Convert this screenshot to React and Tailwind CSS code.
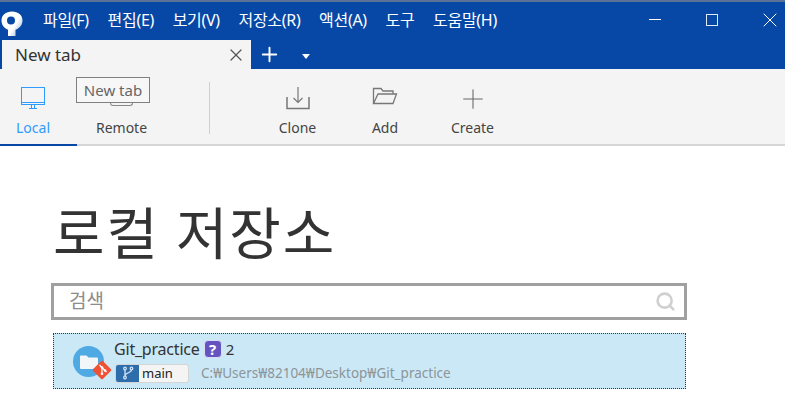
import React from 'react';
import { X, Plus, Search } from 'lucide-react';

const FONT = 'font-["Noto_Sans","Noto_Sans_CJK_KR",sans-serif]';
const menus = ['파일(F)', '편집(E)', '보기(V)', '저장소(R)', '액션(A)', '도구', '도움말(H)'];

const Logo = () => (
  <svg width="22" height="26" viewBox="0 0 22 26">
    <defs>
      <linearGradient id="logoFade" x1="0.3" y1="0.3" x2="1" y2="0.8">
        <stop offset="0.5" stopColor="#fff" />
        <stop offset="1" stopColor="#9db8dc" />
      </linearGradient>
    </defs>
    <path d="M11 0.500C4.800 0.500 0.500 4 0.500 9.500c0 4.300 2.700 7.700 6.500 9.300V25h7.500v-6.200c4.200-1.400 7-5 7-9.300C21.500 4 17.200 0.500 11 0.500z" fill="url(#logoFade)" />
    <circle cx="10" cy="9.500" r="4" fill="#0747a6" />
  </svg>
);

const MonitorIcon = () => (
  <svg width="26" height="23" viewBox="0 0 26 23" fill="none" stroke="#2e9bff" strokeWidth="1">
    <rect x="1.500" y="0.500" width="23" height="17" />
    <path d="M1 15.500h24M1 17.500h24M9 21.500h8M11.500 18v3M14.500 18v3" />
  </svg>
);

const CloneIcon = () => (
  <svg width="24" height="23" viewBox="0 0 24 23" fill="none" stroke="#777" strokeWidth="1.200">
    <path d="M1 10v11.500h22V10" strokeWidth="1.500" />
    <path d="M12 0v15.500M7.500 11L12 15.500l4.500-4.500" />
  </svg>
);

const FolderIcon = () => (
  <svg width="26" height="18" viewBox="0 0 26 18" fill="none" stroke="#777" strokeWidth="1.300">
    <path d="M1.500 16.500V1.500H9l2 2.500h10v3" />
    <path d="M1.500 16.500L6 7h18.500L21 16.500z" />
  </svg>
);

const RepoIcon = () => (
  <div className="relative w-[40px] h-[38px]">
    <div className="mt-[4px] w-[31px] h-[31px] rounded-full bg-[#4fa9e3] flex items-center justify-center">
      <svg width="18" height="14" viewBox="0 0 18 14">
        <path d="M0 1.500a1 1 0 0 1 1-1h5.500l2 2H17a1 1 0 0 1 1 1V13a1 1 0 0 1-1 1H1a1 1 0 0 1-1-1z" fill="#f3f6f9" />
      </svg>
    </div>
    <svg className="absolute left-[19px] top-[18px]" width="20" height="20" viewBox="0 0 20 20">
      <rect x="3" y="3" width="14" height="14" rx="1.500" transform="rotate(45 10 10)" fill="#f05033" />
      <path d="M7.500 5l7 7M10 7.500v6" stroke="#fff" strokeWidth="1.200" />
      <circle cx="10" cy="7.500" r="1.300" fill="#fff" />
      <circle cx="10" cy="13.800" r="1.300" fill="#fff" />
      <circle cx="13" cy="10.500" r="1.300" fill="#fff" />
    </svg>
  </div>
);

const ToolButton = ({ label, icon, width }) => (
  <div className={`flex flex-col items-center ${width}`}>
    <div className="h-[31px] pt-[5px] flex items-start justify-center">{icon}</div>
    <span className="mt-[5px] text-[14px] leading-[20px] text-[#444]">{label}</span>
  </div>
);

export default function App() {
  return (
    <div className={`relative w-[785px] h-[403px] overflow-hidden bg-white ${FONT}`}>
      {/* title bar */}
      <div className="h-[40px] bg-[#0747a6] border-t-2 border-[#5a7296] flex items-center">
        <div className="w-[43px] pl-[1px] pt-[6px] shrink-0"><Logo /></div>
        <div className="flex gap-[18.700px] text-[16px] leading-[20px] -mt-[2px] text-white tracking-[-0.3px]">
          {menus.map(m => <span key={m}>{m}</span>)}
        </div>
        <div className="ml-auto flex items-center text-white -mt-[3px]">
          <div className="w-[12px] h-px bg-white mr-[45px]" />
          <div className="w-[12px] h-[12px] border border-[#dfe8f5] mr-[40px]" />
          <X size={24} strokeWidth={1} className="mr-[3px]" />
        </div>
      </div>

      {/* tab strip */}
      <div className="h-[29px] bg-[#0747a6] flex items-stretch pl-[2px]">
        <div className="w-[249px] bg-[#f4f4f4] flex items-center pl-[13px] pr-[5px]">
          <span className="text-[17px] text-[#333]">New tab</span>
          <X size={20} strokeWidth={1.500} className="ml-auto text-[#555]" />
        </div>
        <div className="flex items-center text-white">
          <Plus size={23} strokeWidth={2} className="ml-[7px]" />
          <span className="ml-[21px] mt-[3px] w-0 h-0 border-x-[4.500px] border-x-transparent border-t-[5px] border-t-white" />
        </div>
      </div>

      {/* toolbar */}
      <div className="h-[77px] bg-[#f4f4f4] border-b-2 border-[#d6d6d6] flex relative">
        <div className="w-[77px] -mb-[2px] border-b-2 border-[#0747a6] pt-[13px] flex flex-col items-start">
          <div className="h-[31px] pt-[5px] pl-[20px]"><MonitorIcon /></div>
          <span className="mt-[5px] ml-[16px] text-[14px] leading-[20px] text-[#2e9bff]">Local</span>
        </div>
        <div className="w-[90px] pt-[13px] flex flex-col items-center">
          <div className="h-[31px] w-full flex justify-center">
            <div className="mt-[21px] -ml-[1px] w-[23px] h-[3px] border-x border-b border-[#888] rounded-b-[3px]" />
          </div>
          <span className="mt-[5px] -ml-[1px] text-[14px] leading-[20px] text-[#444]">Remote</span>
        </div>
        <div className="ml-[42px] mt-[13px] h-[52px] w-px bg-[#cfcfcf]" />
        <div className="flex pt-[13px] ml-[60px]">
          <ToolButton label="Clone" width="w-[55px]" icon={<CloneIcon />} />
          <ToolButton label="Add" width="w-[50px] ml-[35px]" icon={<FolderIcon />} />
          <ToolButton label="Create" width="w-[55px] ml-[35px]" icon={<Plus size={32} strokeWidth={0.800} className="text-[#666] -mt-[4px]" />} />
        </div>
      </div>

      {/* tooltip */}
      <div className="absolute left-[76px] top-[77px] w-[74px] h-[26px] bg-[#f7f7f7] border border-[#808080] flex items-center justify-center text-[15px] text-[#666]">
        New tab
      </div>

      {/* content */}
      <div className="px-[52px]">
        <h1 className="mt-[50px] ml-[1px] text-[56px] leading-[72px] text-[#333] tracking-[1.800px]">로컬 저장소</h1>
        <div className="mt-[15px] w-[636px] h-[37px] -ml-[1px] border-[3px] border-[#a0a0a0] flex items-center pl-[15px] pr-[8px]">
          <span className="text-[19px] text-[#8c8c8c]">검색</span>
          <Search size={21} strokeWidth={3} className="ml-auto text-[#d0d0d0]" />
        </div>
        <div className="mt-[13px] ml-[1px] w-[633px] h-[56px] bg-[#cbe8f6] border border-dotted border-[#333] flex items-center pl-[19px]">
          <RepoIcon />
          <div className="ml-[1px]">
            <div className="flex items-center h-[24px] -mt-[2px]">
              <span className="text-[16px] text-[#333] tracking-[-0.2px]">Git_practice</span>
              <span className="ml-[4px] w-[18px] h-[18px] rounded-[4px] bg-[#6554c0] border border-[#dcdcf5] text-white text-[15px] font-bold flex items-center justify-center">?</span>
              <span className="ml-[4px] text-[15px] text-[#333]">2</span>
            </div>
            <div className="flex items-center h-[20px] mt-[2px]">
              <div className="w-[74px] h-[19px] ml-[1px] flex rounded-[3px] border border-[#d4d4d4] bg-[#f4f4f4] overflow-hidden">
                <div className="w-[23px] bg-[#2e6dab] flex items-center justify-center">
                  <svg width="12" height="14" viewBox="0 0 12 14" fill="none" stroke="#cfe2f5" strokeWidth="1.300">
                    <circle cx="3" cy="2.500" r="1.300" />
                    <circle cx="3" cy="11.500" r="1.300" />
                    <circle cx="9.500" cy="2.500" r="1.300" />
                    <path d="M3 4v6M9.500 4c0 3-6.500 2.500-6.500 6" />
                  </svg>
                </div>
                <span className="ml-[3px] text-[13px] leading-[17px] text-[#222]">main</span>
              </div>
              <span className="ml-[12px] text-[13.500px] text-[#8d9599]">C:₩Users₩82104₩Desktop₩Git_practice</span>
            </div>
          </div>
        </div>
      </div>
    </div>
  );
}
